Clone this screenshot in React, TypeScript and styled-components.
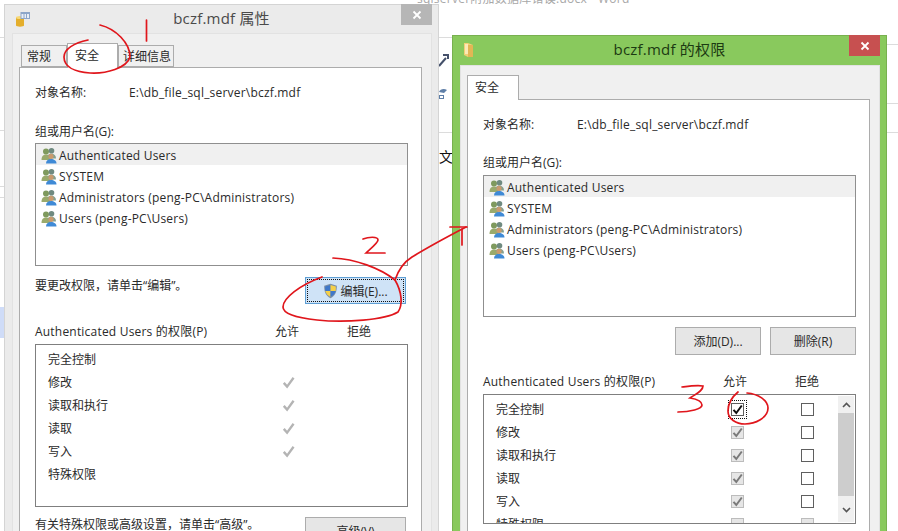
import React from 'react';
import styled, { createGlobalStyle } from 'styled-components';

const GlobalStyle = createGlobalStyle`
  html, body {
    margin: 0;
    padding: 0;
    background: #fff;
  }
  * {
    box-sizing: border-box;
  }
`;

const Desktop = styled.div`
  position: relative;
  width: 898px;
  height: 531px;
  overflow: hidden;
  background: #fff;
  color: #2a2a2a;
  font-family: "Open Sans", "Noto Sans CJK SC", sans-serif;
  font-size: 12px;
`;

/* the Word document that sits behind the two dialogs */
const DocTitle = styled.div`
  position: absolute;
  left: 417px;
  top: -9px;
  font-size: 12px;
  line-height: 16px;
  letter-spacing: 0.25px;
  color: #a8a8a8;
  white-space: nowrap;
`;

const DocRule = styled.div<{ $left: number; $top: number; $width: number; $height?: number; $color?: string }>`
  position: absolute;
  left: ${({ $left }) => $left}px;
  top: ${({ $top }) => $top}px;
  width: ${({ $width }) => $width}px;
  height: ${({ $height }) => $height ?? 1}px;
  background: ${({ $color }) => $color ?? '#dcdcdc'};
`;

const DocGlyph = styled.div`
  position: absolute;
  left: 439px;
  top: 148px;
  font-size: 14px;
  line-height: 18px;
  color: #111;
`;

const DocTool = styled.svg<{ $top: number }>`
  position: absolute;
  left: 438px;
  top: ${({ $top }) => $top}px;
`;

const Frame = styled.section<{ $left: number; $top: number; $active?: boolean }>`
  position: absolute;
  left: ${({ $left }) => $left}px;
  top: ${({ $top }) => $top}px;
  width: 435px;
  height: 600px;
  display: flex;
  flex-direction: column;
  background: ${({ $active }) => ($active ? '#89c95d' : '#ebebeb')};
  border: 1px solid ${({ $active }) => ($active ? '#78b04f' : '#d4d4d4')};
`;

const TitleBar = styled.header<{ $height: number; $active?: boolean }>`
  position: relative;
  flex: none;
  height: ${({ $height }) => $height}px;
  display: flex;
  align-items: center;
  justify-content: center;
  padding-bottom: 4px;
  font-size: 15px;
  letter-spacing: 0.2px;
  color: ${({ $active }) => ($active ? '#1c3a12' : '#4a4a4a')};
`;

const TitleIcon = styled.div`
  position: absolute;
  left: 10px;
  top: 6px;
  display: flex;
`;

const CloseButton = styled.div<{ $active?: boolean }>`
  position: absolute;
  top: -1px;
  right: 6px;
  width: 31px;
  height: 21px;
  display: flex;
  align-items: center;
  justify-content: center;
  background: ${({ $active }) => ($active ? '#c75050' : '#b6b6b6')};
`;

const Client = styled.div`
  flex: 1;
  margin: 0 6px 0 7px;
  padding: 9px 9px 0 6px;
  background: #f0f0f0;
  border: 1px solid #e2e2e2;
  border-bottom: none;
`;

const TabStrip = styled.div<{ $inset: number }>`
  position: relative;
  z-index: 1;
  height: 24px;
  display: flex;
  align-items: flex-end;
  padding-left: ${({ $inset }) => $inset}px;
`;

const Tab = styled.div<{ $selected?: boolean; $width: number; $pad: number }>`
  width: ${({ $width }) => $width}px;
  height: ${({ $selected }) => ($selected ? 25 : 22)}px;
  margin-bottom: ${({ $selected }) => ($selected ? -1 : 0)}px;
  padding-left: ${({ $pad }) => $pad}px;
  padding-bottom: ${({ $selected }) => ($selected ? 2 : 1)}px;
  display: flex;
  align-items: center;
  background: ${({ $selected }) => ($selected ? '#fff' : '#f0f0f0')};
  border: 1px solid #acacac;
  border-bottom: ${({ $selected }) => ($selected ? 'none' : '1px solid #acacac')};
  white-space: nowrap;
`;

const Panel = styled.div`
  height: 560px;
  padding: 16px 13px 0 15px;
  background: #fff;
  border: 1px solid #acacac;
`;

const InfoRow = styled.div`
  display: flex;
  height: 16px;
  align-items: center;
  white-space: nowrap;
`;

const InfoLabel = styled.span`
  width: 94px;
`;

const LatinText = styled.span`
  letter-spacing: 0.2px;
  white-space: nowrap;
`;

const Caption = styled.div<{ $gap: number }>`
  height: 16px;
  margin-top: ${({ $gap }) => $gap}px;
  display: flex;
  align-items: center;
`;

const UserList = styled.div<{ $height: number; $gap: number }>`
  height: ${({ $height }) => $height}px;
  margin-top: ${({ $gap }) => $gap}px;
  border: 1px solid #8f8f8f;
`;

const UserRow = styled.div<{ $selected?: boolean }>`
  height: 21px;
  display: flex;
  align-items: center;
  gap: 2px;
  padding: 2px 0 0 5px;
  background: ${({ $selected }) => ($selected ? '#f0f0f0' : 'transparent')};
`;

const ActionRow = styled.div<{ $gap: number }>`
  display: flex;
  align-items: flex-start;
  justify-content: space-between;
  margin-top: ${({ $gap }) => $gap}px;
  padding-right: 2px;
`;

const Hint = styled.div<{ $top?: number }>`
  padding-top: ${({ $top }) => $top ?? 0}px;
  line-height: 16px;
`;

const ButtonGroup = styled.div`
  display: flex;
  justify-content: flex-end;
  gap: 9px;
  margin-top: 10px;
`;

const Button = styled.div<{ $width: number; $height?: number; $focused?: boolean }>`
  position: relative;
  width: ${({ $width }) => $width}px;
  height: ${({ $height }) => $height ?? 28}px;
  display: flex;
  align-items: center;
  justify-content: center;
  gap: 2px;
  background: ${({ $focused }) => ($focused ? '#cfe3f7' : '#e6e6e6')};
  border: 1px solid ${({ $focused }) => ($focused ? '#5f9fd4' : '#acacac')};
  outline: ${({ $focused }) => ($focused ? '1px dotted #111' : 'none')};
  outline-offset: -3px;
  white-space: nowrap;
`;

const PermHeader = styled.div<{ $gap: number }>`
  display: grid;
  grid-template-columns: 240px 72px 24px;
  height: 16px;
  align-items: center;
  margin-top: ${({ $gap }) => $gap}px;
  white-space: nowrap;
`;

const PermBox = styled.div<{ $height: number }>`
  display: flex;
  height: ${({ $height }) => $height}px;
  margin-top: 6px;
  border: 1px solid #7f7f7f;
  overflow: hidden;
`;

const PermRows = styled.div`
  flex: 1;
  padding: 2px 0 0 12px;
`;

const PermRow = styled.div<{ $nameWidth: number }>`
  display: grid;
  grid-template-columns: ${({ $nameWidth }) => $nameWidth}px 70px 14px;
  height: 23px;
  align-items: center;
`;

const CheckCell = styled.div`
  display: flex;
  align-items: center;
  justify-content: center;
  width: 14px;
  height: 14px;
  margin-top: 2px;
`;

const CheckBox = styled.div<{ $state: 'on' | 'off' | 'grey' | 'blank'; $focused?: boolean }>`
  position: relative;
  flex: none;
  width: 13px;
  height: 13px;
  display: flex;
  align-items: center;
  justify-content: center;
  background: ${({ $state }) => ($state === 'grey' || $state === 'blank' ? '#e6e6e6' : '#fff')};
  border: 1px solid ${({ $state }) => ($state === 'grey' || $state === 'blank' ? '#bcbcbc' : '#5f5f5f')};
  outline: ${({ $focused }) => ($focused ? '1px dotted #111' : 'none')};
  outline-offset: 2px;
`;

const ScrollBar = styled.div`
  flex: none;
  width: 16px;
  margin: 1px 1px 1px 0;
  display: flex;
  flex-direction: column;
  background: #f0f0f0;
`;

const ScrollArrow = styled.div<{ $height: number }>`
  flex: none;
  height: ${({ $height }) => $height}px;
  display: flex;
  align-items: center;
  justify-content: center;
`;

const ScrollThumb = styled.div`
  flex: none;
  height: 83px;
  background: #cdcdcd;
`;

const Ink = styled.svg`
  position: absolute;
  left: 0;
  top: 0;
  z-index: 5;
  pointer-events: none;
`;

const UsersIcon = () => (
  <svg width="16" height="17" viewBox="0 0 16 17">
    <circle cx="5" cy="4.500" r="3" fill="#7f9a5e" />
    <path d="M.5 13c0-4 2-5.500 4.500-5.500S9.500 9 9.500 13z" fill="#9aaa6c" />
    <circle cx="10.500" cy="3.800" r="2.800" fill="#6f8a80" />
    <path d="M6.500 8.500c1-1.300 2.500-1.700 4-1.700 2.500 0 4.500 1.500 4.500 4.700H8.500z" fill="#84a08e" />
    <circle cx="10" cy="9.300" r="2.600" fill="#c99a6e" />
    <path d="M5 16.500c0-3 2-4.500 5-4.500s5.500 1.500 5.500 4.500z" fill="#3f8ad6" />
  </svg>
);

const ShieldIcon = () => (
  <svg width="15" height="16" viewBox="0 0 15 16">
    <path d="M7.500.7 13.800 2.800c.2 5.500-1.500 10-6.300 12.500C2.700 12.800 1 8.300 1.200 2.800z" fill="#7d8fa5" />
    <path d="M7.500 2 7.500 8H2.300c-.2-1.500-.2-3-.1-4.400z" fill="#3f78c9" />
    <path d="M7.500 2l5.300 1.600c.1 1.400.1 2.900-.1 4.400H7.500z" fill="#f5d04a" />
    <path d="M2.300 8h5.200v6C4.700 12.500 3 10.500 2.300 8z" fill="#f5d04a" />
    <path d="M7.500 8h5.200c-.7 2.500-2.400 4.500-5.200 6z" fill="#3f78c9" />
  </svg>
);

const DatabaseFileIcon = () => (
  <svg width="16" height="17" viewBox="0 0 16 17">
    <path d="M1 6.500h8v8c0 1.500-8 1.500-8 0z" fill="#e4ae2c" />
    <ellipse cx="5" cy="6.500" rx="4" ry="1.500" fill="#f6d878" />
    <rect x="5.500" y="1" width="9.500" height="7" fill="#8da6c9" />
    <rect x="6.500" y="3" width="7.500" height="4" fill="#e8eef7" />
    <path d="M9 3v4M11.500 3v4" stroke="#8da6c9" />
  </svg>
);

const FolderIcon = () => (
  <svg width="12" height="16" viewBox="0 0 12 16">
    <path d="M1 1h4l5 2v12H5l-4-2z" fill="#f2cf77" />
    <path d="M5 3h5v12H5z" fill="#e2b655" />
    <path d="M2 2h3v10H2z" fill="#fbeab6" />
  </svg>
);

const CloseGlyph = () => (
  <svg width="10" height="10" viewBox="0 0 10 10">
    <path d="M1.500 1.500l7 7M8.500 1.500l-7 7" stroke="#fff" strokeWidth="1.800" />
  </svg>
);

const Tick = ({ color, size = 11 }: { color: string; size?: number }) => (
  <svg width={size} height={size} viewBox="0 0 11 11">
    <path d="M1.500 5.800 4.300 9 9.800 1.500" fill="none" stroke={color} strokeWidth="2" />
  </svg>
);

const Chevron = ({ up }: { up?: boolean }) => (
  <svg width="9" height="6" viewBox="0 0 9 6">
    <path d={up ? 'M1 5l3.500-3.500L8 5' : 'M1 1l3.500 3.500L8 1'} fill="none" stroke="#555" strokeWidth="1.600" />
  </svg>
);

const users = [
  'Authenticated Users',
  'SYSTEM',
  'Administrators (peng-PC\\Administrators)',
  'Users (peng-PC\\Users)',
];

const permissions = ['完全控制', '修改', '读取和执行', '读取', '写入', '特殊权限'];

const UserListBox = ({ height, gap }: { height: number; gap: number }) => (
  <UserList $height={height} $gap={gap}>
    {users.map((name, i) => (
      <UserRow key={name} $selected={i === 0}>
        <UsersIcon />
        <LatinText>{name}</LatinText>
      </UserRow>
    ))}
  </UserList>
);

const ObjectName = () => (
  <InfoRow>
    <InfoLabel>对象名称:</InfoLabel>
    <LatinText>E:\db_file_sql_server\bczf.mdf</LatinText>
  </InfoRow>
);

const PermTitle = ({ gap }: { gap: number }) => (
  <PermHeader $gap={gap}>
    <LatinText>Authenticated Users 的权限(P)</LatinText>
    <span>允许</span>
    <span>拒绝</span>
  </PermHeader>
);

const PropertiesDialog = () => (
  <Frame $left={4} $top={4}>
    <TitleBar $height={28}>
      <TitleIcon>
        <DatabaseFileIcon />
      </TitleIcon>
      bczf.mdf 属性
      <CloseButton>
        <CloseGlyph />
      </CloseButton>
    </TitleBar>
    <Client>
      <TabStrip $inset={2}>
        <Tab $width={46} $pad={5}>常规</Tab>
        <Tab $width={51} $pad={7} $selected>安全</Tab>
        <Tab $width={56} $pad={4}>详细信息</Tab>
      </TabStrip>
      <Panel>
        <ObjectName />
        <Caption $gap={23}>组或用户名(G):</Caption>
        <UserListBox height={123} gap={4} />
        <ActionRow $gap={11}>
          <Hint $top={1}>要更改权限，请单击“编辑”。</Hint>
          <Button $width={101} $height={27} $focused>
            <ShieldIcon />
            编辑(E)...
          </Button>
        </ActionRow>
        <PermTitle gap={18} />
        <PermBox $height={163}>
          <PermRows>
            {permissions.map((name, i) => (
              <PermRow key={name} $nameWidth={233}>
                <span>{name}</span>
                <CheckCell>{i >= 1 && i <= 4 && <Tick color="#b4b4b4" size={13} />}</CheckCell>
              </PermRow>
            ))}
          </PermRows>
        </PermBox>
        <ActionRow $gap={10}>
          <Hint>有关特殊权限或高级设置，请单击“高级”。</Hint>
          <Button $width={101}>高级(V)</Button>
        </ActionRow>
      </Panel>
    </Client>
  </Frame>
);

const PermissionsDialog = () => (
  <Frame $left={452} $top={35} $active>
    <TitleBar $height={29} $active>
      <TitleIcon>
        <FolderIcon />
      </TitleIcon>
      bczf.mdf 的权限
      <CloseButton $active>
        <CloseGlyph />
      </CloseButton>
    </TitleBar>
    <Client>
      <TabStrip $inset={0}>
        <Tab $width={52} $pad={7} $selected>安全</Tab>
      </TabStrip>
      <Panel>
        <ObjectName />
        <Caption $gap={22}>组或用户名(G):</Caption>
        <UserListBox height={142} gap={5} />
        <ButtonGroup>
          <Button $width={86}>添加(D)...</Button>
          <Button $width={86}>删除(R)</Button>
        </ButtonGroup>
        <PermTitle gap={17} />
        <PermBox $height={130}>
          <PermRows>
            {permissions.map((name, i) => (
              <PermRow key={name} $nameWidth={234}>
                <span>{name}</span>
                <CheckCell>
                  <CheckBox $state={i === 0 ? 'on' : i === 5 ? 'blank' : 'grey'} $focused={i === 0}>
                    {i === 0 && <Tick color="#111" />}
                    {i > 0 && i < 5 && <Tick color="#7a7a7a" />}
                  </CheckBox>
                </CheckCell>
                <CheckCell>
                  <CheckBox $state={i === 5 ? 'blank' : 'off'} />
                </CheckCell>
              </PermRow>
            ))}
          </PermRows>
          <ScrollBar>
            <ScrollArrow $height={17}>
              <Chevron up />
            </ScrollArrow>
            <ScrollThumb />
            <ScrollArrow $height={27}>
              <Chevron />
            </ScrollArrow>
          </ScrollBar>
        </PermBox>
      </Panel>
    </Client>
  </Frame>
);

const redInk = { fill: 'none', stroke: '#e0161c', strokeWidth: 1.7, strokeLinecap: 'round' as const };

const Annotations = () => (
  <Ink width="898" height="531" viewBox="0 0 898 531">
    <g {...redInk}>
      <path d="M100 25C116 29 130 43 130 57C127 68 106 74 90 73C75 72 64 67 64 57C64 49 74 43 88 40" />
      <path d="M146.500 20V41" />
      <path d="M363 239C368 237 378 236 378 240C378 243 370 249 366 253L385 253" />
      <path d="M333 258C355 259 380 268 395 280C402 292 403 305 398 312C385 320 345 323 317 320C298 318 283 314 283 307C283 298 300 285 322 277" />
      <path d="M395 280C399 268 404 262 412 257C425 249 445 238 466 227" />
      <path d="M450 227H467M462 229V245" />
      <path d="M682 387C690 386 697 385 703 386C703 391 696 394 690 398C696 399 702 401 702 405C702 409 690 412 678 412" />
      <path d="M738 392C732 397 728 403 728 411C728 419 736 424 745 424C755 424 768 418 768 408C768 400 758 394 747 393" />
    </g>
  </Ink>
);

const docRules = [
  { left: 0, top: 37, width: 4 },
  { left: 0, top: 130, width: 4 },
  { left: 0, top: 186, width: 4 },
  { left: 0, top: 197, width: 4 },
  { left: 438, top: 37, width: 14 },
  { left: 438, top: 132, width: 14 },
  { left: 887, top: 44, width: 11 },
  { left: 887, top: 103, width: 11 },
  { left: 887, top: 132, width: 11 },
];

export default function App() {
  return (
    <Desktop>
      <GlobalStyle />
      <DocTitle>sqlserver附加数据库错误.docx - Word</DocTitle>
      {docRules.map(rule => (
        <DocRule key={`${rule.left}-${rule.top}`} $left={rule.left} $top={rule.top} $width={rule.width} />
      ))}
      <DocRule $left={0} $top={307} $width={4} $height={31} $color="#cfdcf8" />
      <DocTool $top={52} width="14" height="16" viewBox="0 0 14 16">
        <path d="M1 14 8 6M5 3l5 0 0 4" fill="none" stroke="#44506a" strokeWidth="2" />
      </DocTool>
      <DocTool $top={84} width="14" height="16" viewBox="0 0 14 16">
        <path d="M1 8c1-3 5-4 8-2l-3 3z" fill="#5f7fa8" />
        <rect x="1.500" y="11.500" width="4" height="3" fill="none" stroke="#5f7fa8" />
      </DocTool>
      <DocGlyph>文</DocGlyph>
      <PropertiesDialog />
      <PermissionsDialog />
      <Annotations />
    </Desktop>
  );
}
